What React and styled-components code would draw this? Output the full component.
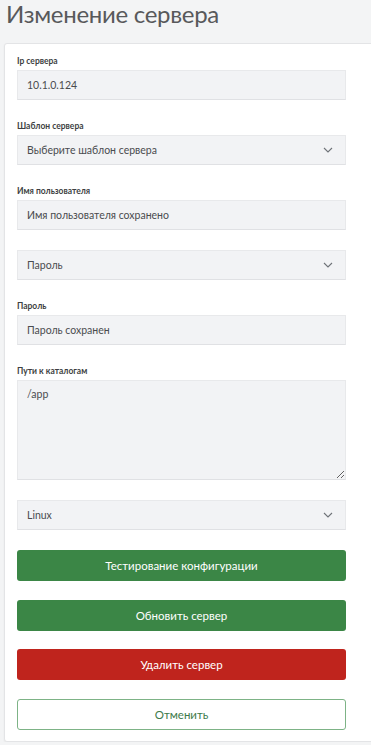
import React from 'react';
import styled, { createGlobalStyle } from 'styled-components';

const GlobalStyle = createGlobalStyle`
  html, body {
    margin: 0;
    padding: 0;
    background: #f3f4f5;
    overflow-x: hidden;
  }
  body {
    font-family: Lato, "Open Sans", sans-serif;
  }
`;

const fields = [
  { type: 'input', label: 'Ip сервера', value: '10.1.0.124' },
  { type: 'select', label: 'Шаблон сервера', value: 'Выберите шаблон сервера' },
  { type: 'input', label: 'Имя пользователя', value: 'Имя пользователя сохранено' },
  { type: 'select', value: 'Пароль' },
  { type: 'input', label: 'Пароль', value: 'Пароль сохранен' },
  { type: 'textarea', label: 'Пути к каталогам', value: '/app' },
  { type: 'select', value: 'Linux' },
];

const buttons = [
  { text: 'Тестирование конфигурации', variant: 'green' },
  { text: 'Обновить сервер', variant: 'green' },
  { text: 'Удалить сервер', variant: 'red' },
  { text: 'Отменить', variant: 'outline' },
];

const Chevron = () => (
  <svg width="10" height="6" viewBox="0 0 10 6" fill="none">
    <path d="M1 1l4 4 4-4" stroke="#6f7378" strokeWidth="1.1" />
  </svg>
);

export default function App() {
  return (
    <Page>
      <GlobalStyle />
      <Title>Изменение сервера</Title>
      <Card>
        {fields.map((f, i) => (
          <Field key={i}>
            {f.label && <Label>{f.label}</Label>}
            {f.type === 'input' && <Box>{f.value}</Box>}
            {f.type === 'select' && (
              <Box>
                {f.value}
                <Chevron />
              </Box>
            )}
            {f.type === 'textarea' && <Area readOnly defaultValue={f.value} />}
          </Field>
        ))}
        <Buttons>
          {buttons.map(b => (
            <Button key={b.text} variant={b.variant}>
              {b.text}
            </Button>
          ))}
        </Buttons>
      </Card>
    </Page>
  );
}

const Page = styled.div`
  padding-top: 0;
`;

const Title = styled.h1`
  margin: 0;
  padding: 0 0 0 6px;
  height: 43px;
  line-height: 28px;
  font-size: 24px;
  font-weight: 400;
  letter-spacing: -0.3px;
  color: #58595b;
`;

const Card = styled.div`
  margin-left: 4px;
  margin-right: -10px;
  background: #fff;
  border: 1px solid #e3e4e6;
  border-radius: 3px;
  box-shadow: 0 1px 2px rgba(0, 0, 0, 0.06);
  padding: 11px 12px 11px;
  width: 380px;
  box-sizing: border-box;
`;

const Field = styled.div`
  width: 329px;
  margin-bottom: 20px;
`;

const Label = styled.div`
  font-size: 8.5px;
  font-weight: 700;
  line-height: 12px;
  color: #3d3f42;
  margin-bottom: 3px;
`;

const Box = styled.div`
  height: 30px;
  box-sizing: border-box;
  background: #f2f3f5;
  border: 1px solid #e8e9eb;
  border-bottom-color: #e0e1e4;
  padding: 0 12px 0 9px;
  display: flex;
  align-items: center;
  justify-content: space-between;
  font-size: 10.5px;
  color: #4a4c4f;
`;

const Area = styled.textarea`
  display: block;
  width: 100%;
  height: 100px;
  box-sizing: border-box;
  background: #f2f3f5;
  border: 1px solid #e8e9eb;
  border-bottom-color: #e0e1e4;
  padding: 7px 9px;
  font-family: Lato, sans-serif;
  font-size: 10.5px;
  color: #4a4c4f;
  outline: none;
  margin: 0;
`;

const Buttons = styled.div`
  width: 329px;
  display: flex;
  flex-direction: column;
  gap: 18.5px;
`;

const Button = styled.button`
  height: 31px;
  box-sizing: border-box;
  border-radius: 3px;
  font-family: Lato, sans-serif;
  font-size: 11.5px;
  cursor: pointer;
  background: ${p =>
    p.variant === 'green' ? '#3b8646' : p.variant === 'red' ? '#bf241d' : '#fff'};
  color: ${p => (p.variant === 'outline' ? '#3d7a4a' : '#fff')};
  border: ${p =>
    p.variant === 'outline' ? '1px solid #7db386' : '1px solid transparent'};
`;
